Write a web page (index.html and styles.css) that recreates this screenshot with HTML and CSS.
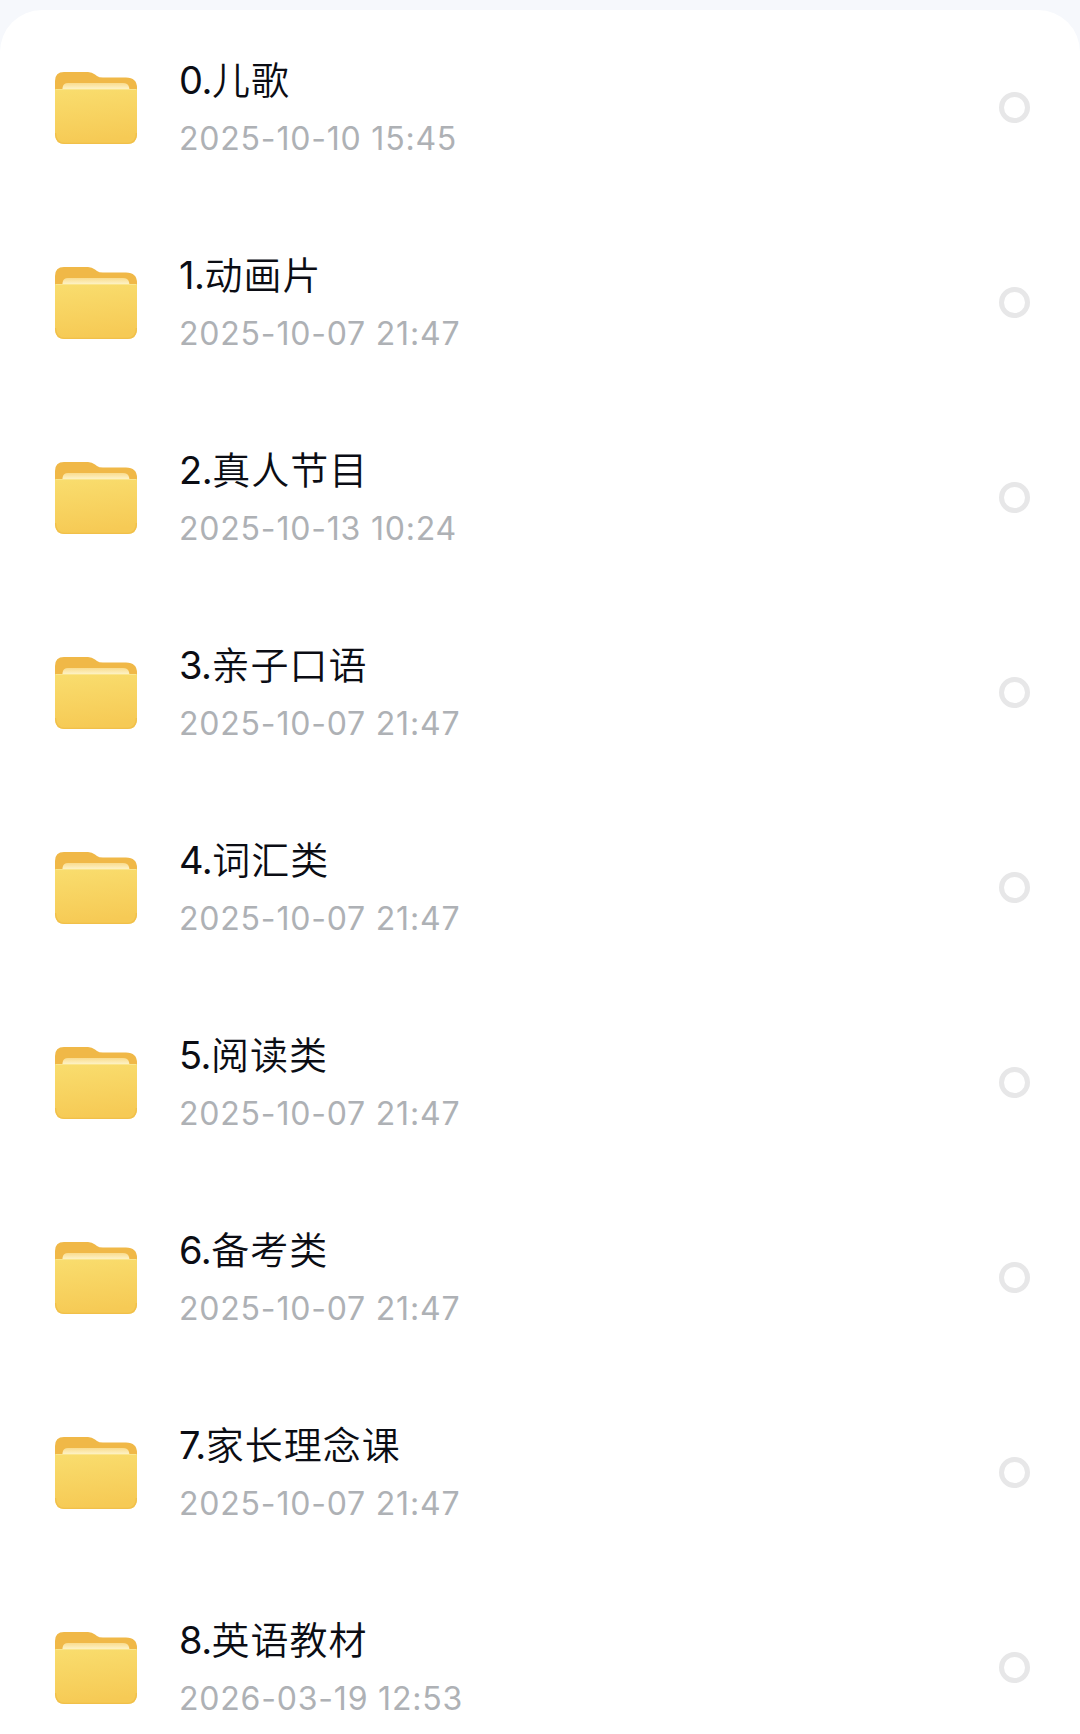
FILE: index.html
```html
<!DOCTYPE html>
<html lang="zh-CN">
<head>
    <meta charset="UTF-8">
    <title>文件列表</title>
    <link rel="stylesheet" href="styles.css">
</head>
<body>

    <!-- Shared folder icon -->
    <svg class="sprite" width="0" height="0" aria-hidden="true">
        <defs>
            <linearGradient id="front" x1="0" y1="0" x2="0.15" y2="1">
                <stop offset="0" stop-color="#f9dd6e"/>
                <stop offset="1" stop-color="#f6ca55"/>
            </linearGradient>
            <linearGradient id="paper" x1="0" y1="0" x2="0" y2="1">
                <stop offset="0" stop-color="#f9dc8e"/>
                <stop offset="0.6" stop-color="#fdf0c0"/>
            </linearGradient>
        </defs>
        <symbol id="folder" viewBox="0 0 82 72">
            <path fill="#f0b847" d="M0 24V9Q0 0 9 0H33Q37 0 40 2.500L42 4Q44 5.500 48 5.500H71Q82 5.500 82 16V24Z"/>
            <path fill="url(#paper)" d="M7.500 20V16Q8 11 13 11H68Q73 11 74 15L75 20Z"/>
            <path fill="url(#front)" d="M0 17H82V62Q82 72 72 72H10Q0 72 0 62Z"/>
            <path fill="none" stroke="#fae58c" d="M1 17.500H81"/>
            <path fill="none" stroke="#f1c04a" stroke-width="1.200" d="M.6 61Q.6 71.400 10 71.400H72Q81.400 71.400 81.400 61"/>
        </symbol>
    </svg>

    <!-- File list -->
    <ul class="file-list">
        <li class="file">
            <svg class="icon"><use href="#folder"/></svg>
            <div class="info">
                <div class="name"><span class="num">0.</span>儿歌</div>
                <div class="date">2025-10-10 15:45</div>
            </div>
            <span class="check"></span>
        </li>
        <li class="file">
            <svg class="icon"><use href="#folder"/></svg>
            <div class="info">
                <div class="name"><span class="num">1.</span>动画片</div>
                <div class="date">2025-10-07 21:47</div>
            </div>
            <span class="check"></span>
        </li>
        <li class="file">
            <svg class="icon"><use href="#folder"/></svg>
            <div class="info">
                <div class="name"><span class="num">2.</span>真人节目</div>
                <div class="date">2025-10-13 10:24</div>
            </div>
            <span class="check"></span>
        </li>
        <li class="file">
            <svg class="icon"><use href="#folder"/></svg>
            <div class="info">
                <div class="name"><span class="num">3.</span>亲子口语</div>
                <div class="date">2025-10-07 21:47</div>
            </div>
            <span class="check"></span>
        </li>
        <li class="file">
            <svg class="icon"><use href="#folder"/></svg>
            <div class="info">
                <div class="name"><span class="num">4.</span>词汇类</div>
                <div class="date">2025-10-07 21:47</div>
            </div>
            <span class="check"></span>
        </li>
        <li class="file">
            <svg class="icon"><use href="#folder"/></svg>
            <div class="info">
                <div class="name"><span class="num">5.</span>阅读类</div>
                <div class="date">2025-10-07 21:47</div>
            </div>
            <span class="check"></span>
        </li>
        <li class="file">
            <svg class="icon"><use href="#folder"/></svg>
            <div class="info">
                <div class="name"><span class="num">6.</span>备考类</div>
                <div class="date">2025-10-07 21:47</div>
            </div>
            <span class="check"></span>
        </li>
        <li class="file">
            <svg class="icon"><use href="#folder"/></svg>
            <div class="info">
                <div class="name"><span class="num">7.</span>家长理念课</div>
                <div class="date">2025-10-07 21:47</div>
            </div>
            <span class="check"></span>
        </li>
        <li class="file">
            <svg class="icon"><use href="#folder"/></svg>
            <div class="info">
                <div class="name"><span class="num">8.</span>英语教材</div>
                <div class="date">2026-03-19 12:53</div>
            </div>
            <span class="check"></span>
        </li>
    </ul>

</body>
</html>
```

FILE: styles.css
```css
body {
    margin: 0;
    height: 1734px;
    overflow: hidden;
    display: flex;
    flex-direction: column;
    background-color: #f6f8fc;
    font-family: Inter, 'Noto Sans CJK SC', sans-serif;
}

.sprite {
    display: block;
    flex: none;
}

.file-list {
    flex: none;
    margin: 10px 0 0;
    padding: 0;
    list-style: none;
    background-color: #fff;
    border-radius: 42px 42px 0 0;
}

.file {
    display: flex;
    align-items: center;
    height: 195px;
    padding: 0 50px 0 55px;
}

.icon {
    width: 82px;
    height: 72px;
    flex: none;
}

.info {
    flex: 1;
    margin-left: 42px;
    padding-top: 3px;
}

.name {
    height: 58px;
    line-height: 58px;
    font-size: 38px;
    font-weight: 350;
    letter-spacing: 1px;
    color: #0b0d14;
    white-space: nowrap;
}

.num {
    font-weight: 400;
    letter-spacing: -0.5px;
}

.date {
    height: 58px;
    line-height: 59px;
    font-size: 32px;
    letter-spacing: 0.8px;
    color: #aeb1b5;
    white-space: nowrap;
}

.check {
    box-sizing: border-box;
    width: 31px;
    height: 31px;
    border: 5px solid #e7e7e8;
    border-radius: 50%;
}
```
